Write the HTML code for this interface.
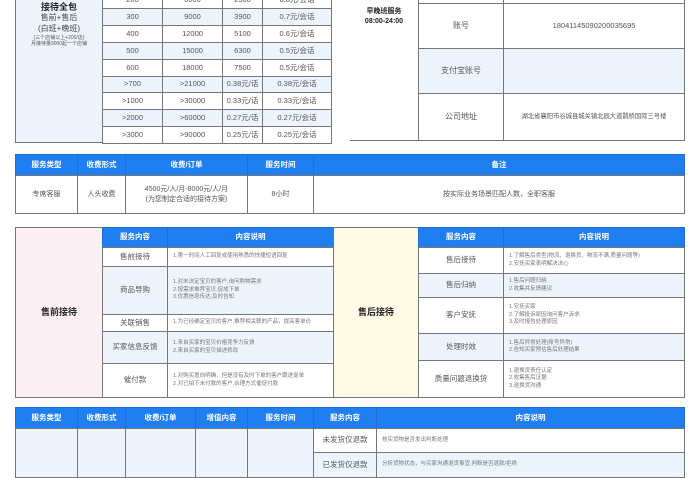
<!DOCTYPE html>
<html><head><meta charset="utf-8"><style>
*{margin:0;padding:0;box-sizing:border-box}
body{width:700px;height:470px;overflow:hidden;background:#fff;position:relative;font-family:"Liberation Sans","Noto Sans CJK SC",sans-serif;color:#555}
.c{position:absolute;border:1px solid #777;display:flex;align-items:center;justify-content:center;text-align:center;font-size:7.5px;line-height:1.35;margin:0 -1px -1px 0}
.h{background:#1f7ff0;color:#fff;font-weight:bold;font-size:7.5px;border-color:#1f6fd0}
.l{background:#eef4fc}
.t{justify-content:flex-start;text-align:left;padding-left:5px;font-size:5.5px;color:#777}
.b{font-weight:bold;color:#222}
</style></head><body>

<!-- top left block -->
<div class="c l" style="left:15px;top:-2px;width:88px;height:145px;flex-direction:column;justify-content:flex-start;padding-top:2px">
<div class="b" style="font-size:9px">接待全包</div>
<div style="font-size:8px;color:#444">售前+售后</div>
<div style="font-size:8px;color:#444">(白班+晚班)</div>
<div style="font-size:5px">(三个店铺以上+200/店)</div>
<div style="font-size:5px">月接待量9000起一个店铺</div>
</div>
<div id="pt"></div>

<!-- price table rows -->
<script>
var rows=[["200","6000","2500","0.8元/会话"],["300","9000","3900","0.7元/会话"],["400","12000","5100","0.6元/会话"],["500","15000","6300","0.5元/会话"],["600","18000","7500","0.5元/会话"],["&gt;700","&gt;21000","0.38元/话","0.38元/会话"],["&gt;1000","&gt;30000","0.33元/话","0.33元/会话"],["&gt;2000","&gt;60000","0.27元/话","0.27元/会话"],["&gt;3000","&gt;90000","0.25元/话","0.25元/会话"]];
var ys=[-9,8,25,42,59,76,92,109,126,143];var xs=[102,162,222,262,331];var h="";
for(var i=0;i<9;i++){for(var j=0;j<4;j++){h+='<div class="c'+(i%2?' l':'')+'" style="left:'+xs[j]+'px;top:'+ys[i]+'px;width:'+(xs[j+1]-xs[j]+1)+'px;height:'+(ys[i+1]-ys[i]+1)+'px;font-size:7.5px">'+rows[i][j]+'</div>';}}
document.write(h);
</script>

<!-- top right -->
<div style="position:absolute;left:350px;top:140px;width:69px;border-top:1px solid #777"></div>
<div style="position:absolute;left:418px;top:0;height:141px;border-left:1px solid #777"></div>
<div class="b" style="position:absolute;left:350px;top:7px;width:68px;text-align:center;font-size:7px;line-height:1.4">早晚班服务<br>08:00-24:00</div>
<div class="c" style="left:418px;top:-10px;width:86px;height:14px"></div>
<div class="c" style="left:503px;top:-10px;width:182px;height:14px"></div>
<div class="c" style="left:418px;top:3px;width:86px;height:46px;font-size:8px">账号</div>
<div class="c" style="left:503px;top:3px;width:182px;height:46px;font-size:7.5px">18041145090200035695</div>
<div class="c l" style="left:418px;top:48px;width:86px;height:46px;font-size:8px">支付宝账号</div>
<div class="c l" style="left:503px;top:48px;width:182px;height:46px"></div>
<div class="c" style="left:418px;top:93px;width:86px;height:48px;font-size:8px">公司地址</div>
<div class="c" style="left:503px;top:93px;width:182px;height:48px;font-size:6.3px;white-space:nowrap">湖北省襄阳市谷城县城关镇北辰大道鹊桥国际三号楼</div>

<!-- middle table -->
<div class="c h" style="left:15px;top:154px;width:63px;height:22px">服务类型</div>
<div class="c h" style="left:77px;top:154px;width:49px;height:22px">收费形式</div>
<div class="c h" style="left:125px;top:154px;width:123px;height:22px">收费/订单</div>
<div class="c h" style="left:247px;top:154px;width:67px;height:22px">服务时间</div>
<div class="c h" style="left:313px;top:154px;width:372px;height:22px">备注</div>
<div class="c" style="left:15px;top:175px;width:63px;height:39px;font-size:7px">专席客服</div>
<div class="c" style="left:77px;top:175px;width:49px;height:39px;font-size:7px">人头收费</div>
<div class="c" style="left:125px;top:175px;width:123px;height:39px;font-size:7px">4500元/人/月-8000元/人/月<br>(为您制定合适的接待方案)</div>
<div class="c" style="left:247px;top:175px;width:67px;height:39px;font-size:7px">8小时</div>
<div class="c" style="left:313px;top:175px;width:372px;height:39px;font-size:7px">按实际业务场景匹配人数，全职客服</div>

<!-- section 3 left -->
<div class="c b" style="left:15px;top:227px;width:88px;height:171px;background:#fdf0f5;font-size:9px">售前接待</div>
<div class="c h" style="left:102px;top:227px;width:66px;height:21px">服务内容</div>
<div class="c h" style="left:167px;top:227px;width:167px;height:21px">内容说明</div>
<div class="c" style="left:102px;top:247px;width:66px;height:20px;font-size:7.5px">售前接待</div>
<div class="c t" style="left:167px;top:247px;width:167px;height:20px">1.第一时间人工回复或使用熟悉的快捷短语回复</div>
<div class="c l" style="left:102px;top:266px;width:66px;height:49px;font-size:7.5px">商品导购</div>
<div class="c l t" style="left:167px;top:266px;width:167px;height:49px">1.对未决定宝贝的客户,询问购物需求<br>2.按需求推荐宝贝,促成下单<br>3.优惠信息传达,及时告知</div>
<div class="c" style="left:102px;top:314px;width:66px;height:18px;font-size:7.5px">关联销售</div>
<div class="c t" style="left:167px;top:314px;width:167px;height:18px">1.为已经确定宝贝的客户,推荐相关联的产品，提高客单价</div>
<div class="c l" style="left:102px;top:331px;width:66px;height:33px;font-size:7.5px">买家信息反馈</div>
<div class="c l t" style="left:167px;top:331px;width:167px;height:33px">1.来自买家的宝贝价格竞争力反馈<br>2.来自买家的宝贝描述修改</div>
<div class="c" style="left:102px;top:363px;width:66px;height:35px;font-size:7.5px">催付款</div>
<div class="c t" style="left:167px;top:363px;width:167px;height:35px">1.对购买意向明确，但是没有及时下单的客户跟进促单<br>2.对已拍下未付款的客户,合理方式催促付款</div>

<!-- section 3 right -->
<div class="c b" style="left:333px;top:227px;width:86px;height:171px;background:#fffbe6;font-size:9px">售后接待</div>
<div class="c h" style="left:418px;top:227px;width:86px;height:21px">服务内容</div>
<div class="c h" style="left:503px;top:227px;width:182px;height:21px">内容说明</div>
<div class="c" style="left:418px;top:247px;width:86px;height:27px;font-size:7.5px">售后接待</div>
<div class="c t" style="left:503px;top:247px;width:182px;height:27px">1.了解售后类型(物流、退换货、物流不满,质量问题等)<br>2.安抚买家表明解决决心</div>
<div class="c l" style="left:418px;top:273px;width:86px;height:25px;font-size:7.5px">售后归纳</div>
<div class="c l t" style="left:503px;top:273px;width:182px;height:25px">1.售后问题归纳<br>2.收集并反馈建议</div>
<div class="c" style="left:418px;top:297px;width:86px;height:37px;font-size:7.5px">客户安抚</div>
<div class="c t" style="left:503px;top:297px;width:182px;height:37px">1.安抚买家<br>2.了解投诉原因询问客户诉求<br>3.及时报告处理原因</div>
<div class="c l" style="left:418px;top:333px;width:86px;height:28px;font-size:7.5px">处理时效</div>
<div class="c l t" style="left:503px;top:333px;width:182px;height:28px">1.售后异常处理(账号异常)<br>2.告知买家预估售后处理结果</div>
<div class="c" style="left:418px;top:360px;width:86px;height:38px;font-size:7.5px">质量问题退换货</div>
<div class="c t" style="left:503px;top:360px;width:182px;height:38px">1.退换货责任认定<br>2.收集售后证据<br>3.退换货沟通</div>

<!-- bottom -->
<div class="c h" style="left:15px;top:407px;width:63px;height:22px">服务类型</div>
<div class="c h" style="left:77px;top:407px;width:49px;height:22px">收费形式</div>
<div class="c h" style="left:125px;top:407px;width:71px;height:22px">收费/订单</div>
<div class="c h" style="left:195px;top:407px;width:53px;height:22px">增值内容</div>
<div class="c h" style="left:247px;top:407px;width:67px;height:22px">服务时间</div>
<div class="c h" style="left:313px;top:407px;width:64px;height:22px">服务内容</div>
<div class="c h" style="left:376px;top:407px;width:309px;height:22px">内容说明</div>
<div class="c l" style="left:15px;top:428px;width:63px;height:50px"></div>
<div class="c l" style="left:77px;top:428px;width:49px;height:50px"></div>
<div class="c l" style="left:125px;top:428px;width:71px;height:50px"></div>
<div class="c l" style="left:195px;top:428px;width:53px;height:50px"></div>
<div class="c l" style="left:247px;top:428px;width:67px;height:50px"></div>
<div class="c" style="left:313px;top:428px;width:64px;height:25px;font-size:7.5px">未发货仅退款</div>
<div class="c t" style="left:376px;top:428px;width:309px;height:25px">核实货物是否发出判断处理</div>
<div class="c l" style="left:313px;top:452px;width:64px;height:26px;font-size:7.5px">已发货仅退款</div>
<div class="c l t" style="left:376px;top:452px;width:309px;height:26px">分析货物状态，与买家沟通退货事宜,判断是否退款/拒绝</div>
</body></html>
